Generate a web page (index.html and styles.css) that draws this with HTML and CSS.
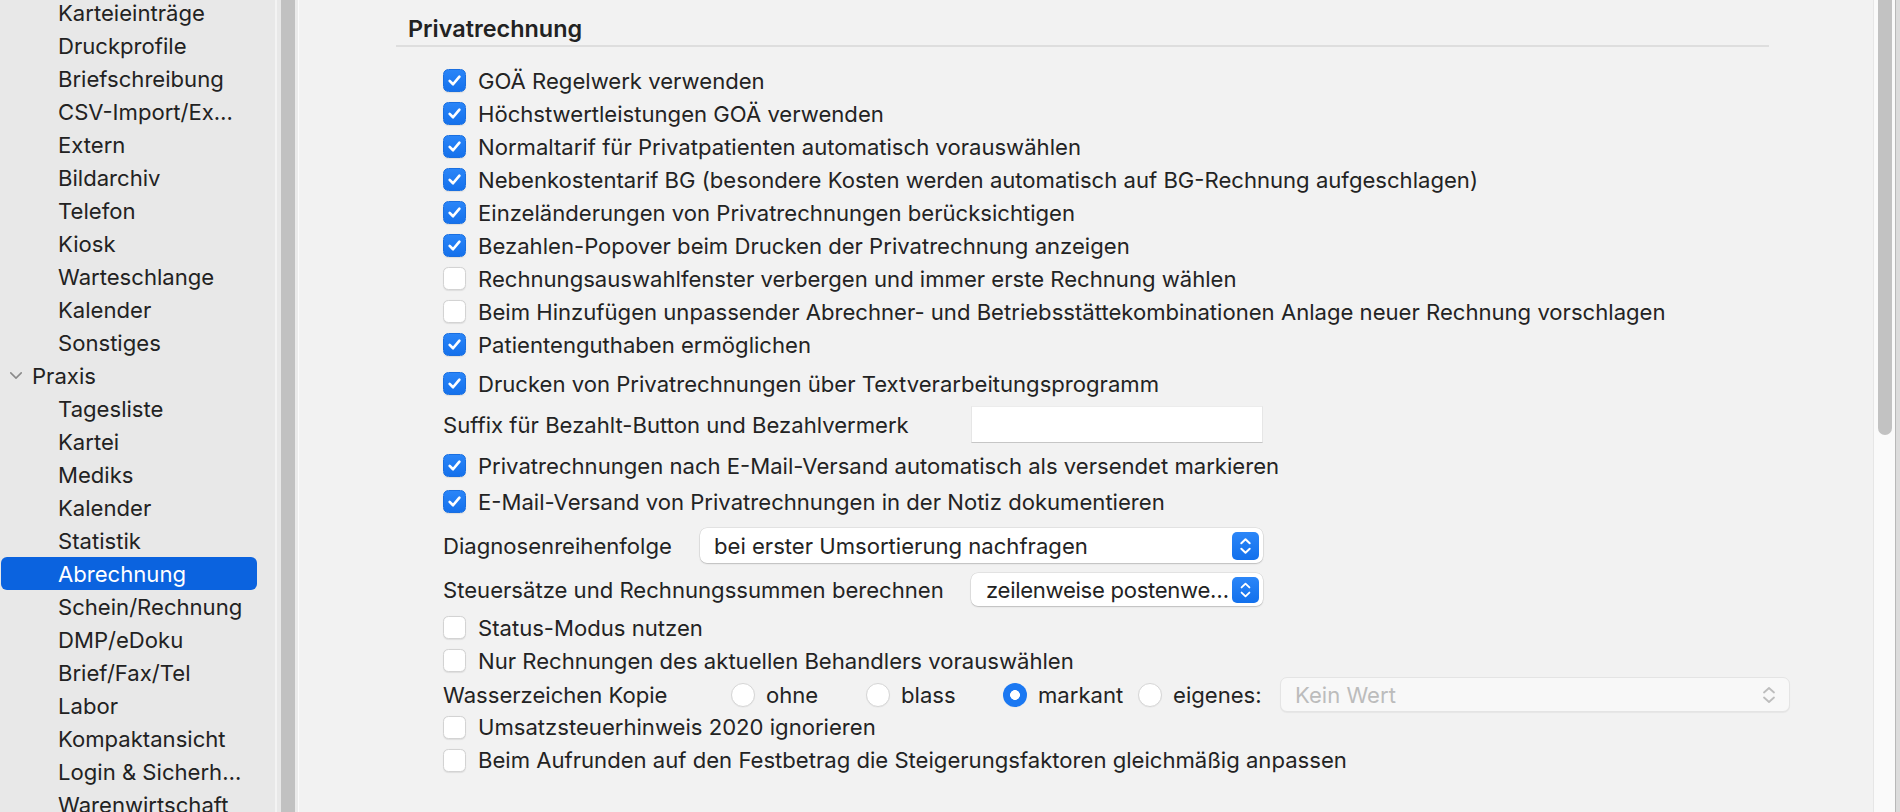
FILE: index.html
```html
<!DOCTYPE html>
<html lang="de">
<head>
<meta charset="utf-8">
<title>Einstellungen – Abrechnung</title>
<link rel="stylesheet" href="styles.css">
</head>
<body>
<div class="app">
  <nav class="sidebar">
    <ul class="tree">
      <li class="item child">Karteieinträge</li>
      <li class="item child">Druckprofile</li>
      <li class="item child">Briefschreibung</li>
      <li class="item child">CSV-Import/Ex…</li>
      <li class="item child">Extern</li>
      <li class="item child">Bildarchiv</li>
      <li class="item child">Telefon</li>
      <li class="item child">Kiosk</li>
      <li class="item child">Warteschlange</li>
      <li class="item child">Kalender</li>
      <li class="item child">Sonstiges</li>
      <li class="item group"><svg class="disclosure" viewBox="0 0 16 10" width="16" height="10"><path d="M2 2 L8 8 L14 2" fill="none" stroke="#8a8a8a" stroke-width="1.8" stroke-linecap="round" stroke-linejoin="round"/></svg>Praxis</li>
      <li class="item child">Tagesliste</li>
      <li class="item child">Kartei</li>
      <li class="item child">Mediks</li>
      <li class="item child">Kalender</li>
      <li class="item child">Statistik</li>
      <li class="item child selected">Abrechnung</li>
      <li class="item child">Schein/Rechnung</li>
      <li class="item child">DMP/eDoku</li>
      <li class="item child">Brief/Fax/Tel</li>
      <li class="item child">Labor</li>
      <li class="item child">Kompaktansicht</li>
      <li class="item child">Login &amp; Sicherh…</li>
      <li class="item child">Warenwirtschaft</li>
    </ul>
  </nav>
  <div class="splitter"><span class="sp-a"></span><span class="sp-b"></span><span class="sp-c"></span><span class="sp-d"></span><span class="sp-e"></span></div>
  <main class="content">
    <div class="pane">
      <section class="section">
        <h2 class="section-title">Privatrechnung</h2>
        <div class="rows">
          <div class="row"><span class="cb on"><svg viewBox="0 0 23 23"><path d="M6.2 11.9 L9.9 15.6 L16.9 7.3"/></svg></span><span class="lbl">GOÄ Regelwerk verwenden</span></div>
          <div class="row"><span class="cb on"><svg viewBox="0 0 23 23"><path d="M6.2 11.9 L9.9 15.6 L16.9 7.3"/></svg></span><span class="lbl">Höchstwertleistungen GOÄ verwenden</span></div>
          <div class="row"><span class="cb on"><svg viewBox="0 0 23 23"><path d="M6.2 11.9 L9.9 15.6 L16.9 7.3"/></svg></span><span class="lbl">Normaltarif für Privatpatienten automatisch vorauswählen</span></div>
          <div class="row"><span class="cb on"><svg viewBox="0 0 23 23"><path d="M6.2 11.9 L9.9 15.6 L16.9 7.3"/></svg></span><span class="lbl">Nebenkostentarif BG (besondere Kosten werden automatisch auf BG-Rechnung aufgeschlagen)</span></div>
          <div class="row"><span class="cb on"><svg viewBox="0 0 23 23"><path d="M6.2 11.9 L9.9 15.6 L16.9 7.3"/></svg></span><span class="lbl">Einzeländerungen von Privatrechnungen berücksichtigen</span></div>
          <div class="row"><span class="cb on"><svg viewBox="0 0 23 23"><path d="M6.2 11.9 L9.9 15.6 L16.9 7.3"/></svg></span><span class="lbl">Bezahlen-Popover beim Drucken der Privatrechnung anzeigen</span></div>
          <div class="row"><span class="cb"></span><span class="lbl">Rechnungsauswahlfenster verbergen und immer erste Rechnung wählen</span></div>
          <div class="row"><span class="cb"></span><span class="lbl">Beim Hinzufügen unpassender Abrechner- und Betriebsstättekombinationen Anlage neuer Rechnung vorschlagen</span></div>
          <div class="row"><span class="cb on"><svg viewBox="0 0 23 23"><path d="M6.2 11.9 L9.9 15.6 L16.9 7.3"/></svg></span><span class="lbl">Patientenguthaben ermöglichen</span></div>
          <div class="row mt6"><span class="cb on"><svg viewBox="0 0 23 23"><path d="M6.2 11.9 L9.9 15.6 L16.9 7.3"/></svg></span><span class="lbl">Drucken von Privatrechnungen über Textverarbeitungsprogramm</span></div>
          <div class="row field-row mt6"><span class="flabel w528">Suffix für Bezahlt-Button und Bezahlvermerk</span><span class="textfield"></span></div>
          <div class="row mt6"><span class="cb on"><svg viewBox="0 0 23 23"><path d="M6.2 11.9 L9.9 15.6 L16.9 7.3"/></svg></span><span class="lbl">Privatrechnungen nach E-Mail-Versand automatisch als versendet markieren</span></div>
          <div class="row mt3"><span class="cb on"><svg viewBox="0 0 23 23"><path d="M6.2 11.9 L9.9 15.6 L16.9 7.3"/></svg></span><span class="lbl">E-Mail-Versand von Privatrechnungen in der Notiz dokumentieren</span></div>
          <div class="row popup-row mt10h"><span class="flabel w257">Diagnosenreihenfolge</span><span class="popup wide"><span class="popup-text">bei erster Umsortierung nachfragen</span><span class="stepper"><svg viewBox="0 0 27 28"><path d="M9.3 11.2 L13.5 7.2 L17.7 11.2 M9.3 16.8 L13.5 20.8 L17.7 16.8"/></svg></span></span></div>
          <div class="row popup-row2 mt10"><span class="flabel w528">Steuersätze und Rechnungssummen berechnen</span><span class="popup narrow"><span class="popup-text">zeilenweise postenwe…</span><span class="stepper"><svg viewBox="0 0 27 28"><path d="M9.3 11.2 L13.5 7.2 L17.7 11.2 M9.3 16.8 L13.5 20.8 L17.7 16.8"/></svg></span></span></div>
          <div class="row mt5h"><span class="cb"></span><span class="lbl">Status-Modus nutzen</span></div>
          <div class="row"><span class="cb"></span><span class="lbl">Nur Rechnungen des aktuellen Behandlers vorauswählen</span></div>
          <div class="row radio-row"><span class="flabel w288">Wasserzeichen Kopie</span>
            <span class="opt w135"><span class="rb"></span><span class="lbl">ohne</span></span>
            <span class="opt w137"><span class="rb"></span><span class="lbl">blass</span></span>
            <span class="opt w135"><span class="rb on"></span><span class="lbl">markant</span></span>
            <span class="opt w142"><span class="rb"></span><span class="lbl">eigenes:</span></span>
            <span class="combo"><span class="placeholder">Kein Wert</span><svg class="combo-arrows" viewBox="0 0 20 24"><path d="M5 9.5 L10 5 L15 9.5 M5 14.5 L10 19 L15 14.5"/></svg></span>
          </div>
          <div class="row"><span class="cb"></span><span class="lbl">Umsatzsteuerhinweis 2020 ignorieren</span></div>
          <div class="row"><span class="cb"></span><span class="lbl">Beim Aufrunden auf den Festbetrag die Steigerungsfaktoren gleichmäßig anpassen</span></div>
        </div>
      </section>
    </div>
    <div class="vscroll"><div class="thumb"></div></div>
    <div class="edge"></div>
  </main>
</div>
</body>
</html>
```

FILE: styles.css
```css
* { box-sizing: border-box; }
html, body { margin: 0; padding: 0; }
body {
  width: 1900px;
  height: 812px;
  overflow: hidden;
  font-family: Inter, "Noto Sans", "Liberation Sans", sans-serif;
  color: #232323;
  background: #f2f2f2;
}
.app { display: flex; width: 1900px; height: 812px; }

/* Sidebar */
.sidebar { width: 275px; flex: none; background: #e8e8e8; overflow: hidden; }
.tree { list-style: none; margin: -4px 0 0 0; padding: 0; }
.item {
  height: 33px;
  display: flex;
  align-items: center;
  font-size: 22.1px;
  white-space: nowrap;
  color: #222;
}
.item.child { padding-left: 58px; }
.item.group { padding-left: 9px; }
.disclosure { width: 14px; height: 9px; margin-right: 9px; }
.item.selected {
  background: #0b63df;
  color: #fff;
  border-radius: 6px;
  margin-left: 1px;
  width: 256px;
  padding-left: 57px;
}

/* Splitter */
.splitter { display: flex; flex: none; height: 812px; }
.splitter span { display: block; height: 100%; }
.sp-a { width: 2px; background: #f3f3f3; }
.sp-b { width: 4px; background: #e8e8e8; }
.sp-c { width: 14px; background: #c1c1c1; }
.sp-d { width: 3px; background: #ebebeb; }
.sp-e { width: 1px; background: #fbfbfb; }

/* Content */
.content { flex: 1; display: flex; background: #f2f2f2; }
.pane { flex: 1; overflow: hidden; }
.section { margin-left: 97px; width: 1373px; }
.section-title {
  margin: 16px 0 0 0;
  padding: 0 0 3px 12px;
  font-size: 23.4px;
  line-height: 26px;
  font-weight: 600;
  color: #222;
  border-bottom: 2px solid #dedede;
}
.rows { padding-left: 47px; margin-top: 17px; }
.row {
  height: 33px;
  display: flex;
  align-items: center;
  font-size: 22.1px;
  white-space: nowrap;
}
.mt6 { margin-top: 6px; }
.mt3 { margin-top: 3px; }
.mt10 { margin-top: 10px; }
.mt10h { margin-top: 10px; }
.mt5h { margin-top: 5px; }
.field-row { height: 37px; }
.popup-row { height: 35px; }
.radio-row { height: 32px; margin-top: 1.5px; }

.cb {
  width: 23px; height: 23px; flex: none;
  border-radius: 5.5px;
  background: #fff;
  border: 1px solid #d3d3d3;
  box-shadow: 0 0.5px 1px rgba(0,0,0,0.08);
  margin-right: 12px;
  display: flex; align-items: center; justify-content: center;
}
.cb.on {
  background: linear-gradient(#2a85f8, #1571ec);
  border-color: #1a6fe0;
}
.cb svg { width: 23px; height: 23px; }
.cb svg path { fill: none; stroke: #fff; stroke-width: 2.9; stroke-linecap: round; stroke-linejoin: round; }

.flabel { flex: none; }
.w528 { width: 528px; }
.w257 { width: 257px; }
.w288 { width: 288px; }

.textfield {
  width: 292px; height: 37px;
  background: #fff;
  border-top: 1px solid #ececec;
  border-left: 1px solid #e6e6e6;
  border-right: 1px solid #e6e6e6;
  border-bottom: 1px solid #c6c6c6;
}

.popup {
  height: 35px;
  display: flex; align-items: center; justify-content: space-between;
  background: #fff;
  border-radius: 7px;
  box-shadow: 0 0 0 0.5px rgba(0,0,0,0.12), 0 1px 1.5px rgba(0,0,0,0.16);
  padding: 0 4px 0 14px;
}
.popup.wide { width: 563px; }
.popup.narrow { width: 292px; height: 33px; padding-left: 15px; }
.popup-text { font-size: 22.1px; }
.popup.narrow .popup-text { letter-spacing: -0.3px; }
.stepper {
  width: 27px; height: 28px; flex: none;
  border-radius: 5px;
  background: linear-gradient(#2b86f8, #1270ec);
  display: flex;
}
.popup.narrow .stepper { height: 26px; }
.stepper svg { width: 27px; height: 100%; }
.stepper svg path { fill: none; stroke: #fff; stroke-width: 2; stroke-linecap: round; stroke-linejoin: round; }

.opt { display: flex; align-items: center; flex: none; }
.w135 { width: 135px; }
.w137 { width: 137px; }
.w142 { width: 142px; }
.rb {
  width: 24px; height: 24px; flex: none;
  border-radius: 50%;
  background: #fff;
  border: 1px solid #d6d6d6;
  box-shadow: 0 0.5px 1px rgba(0,0,0,0.06);
  margin-right: 11px;
}
.rb.on {
  border: none;
  background: radial-gradient(circle, #fff 0 4.6px, #1b78f2 5.2px);
}
.combo {
  width: 510px; height: 35px; flex: none;
  display: flex; align-items: center; justify-content: space-between;
  background: #f8f8f8;
  border: 1px solid #e4e4e4;
  border-radius: 7px;
  box-shadow: 0 1px 1px rgba(0,0,0,0.05);
  padding: 0 10px 0 14px;
}
.placeholder { color: #bcbcbc; font-size: 22.1px; }
.combo-arrows { width: 20px; height: 24px; }
.combo-arrows path { fill: none; stroke: #bdbdbd; stroke-width: 1.8; stroke-linecap: round; stroke-linejoin: round; }

/* Scrollbar */
.vscroll {
  width: 22px; flex: none;
  background: #fafafa;
  border-left: 1px solid #e6e6e6;
  padding-left: 4px;
}
.thumb { width: 14px; height: 435px; border-radius: 0 0 7px 7px; background: #c2c2c2; }
.edge { width: 5px; flex: none; background: #dcdcdc; border-left: 1px solid #b8b8b8; }
```
